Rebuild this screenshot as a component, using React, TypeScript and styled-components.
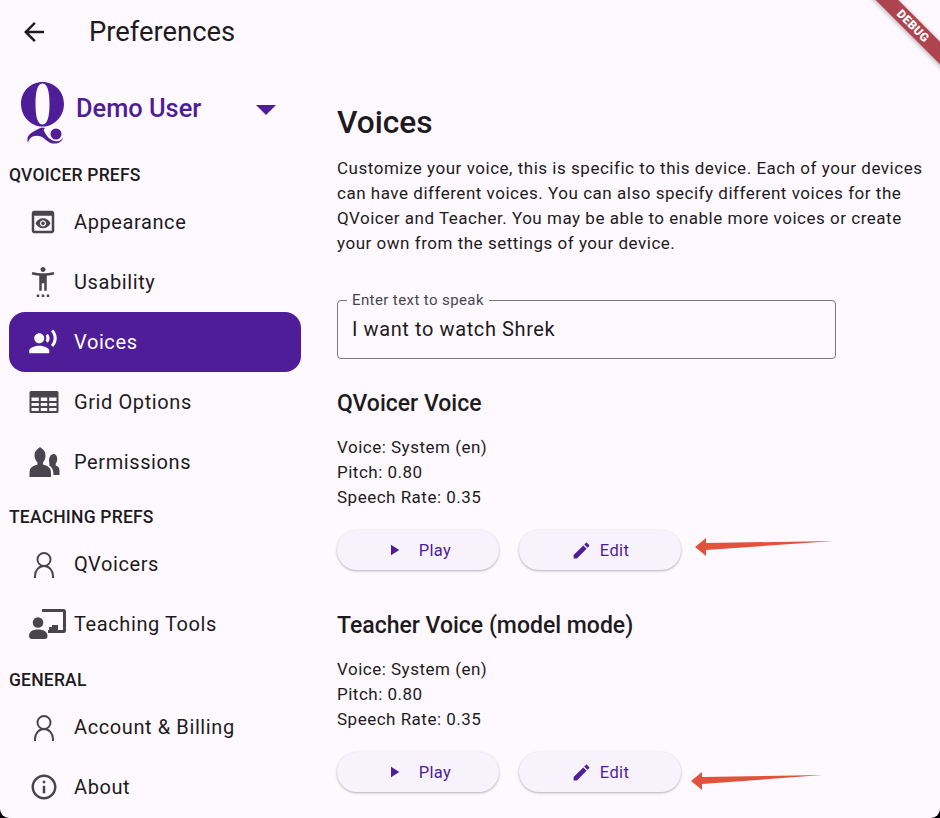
import React from "react";
import styled, { createGlobalStyle } from "styled-components";

const purple = "#4f1d98";
const ink = "#1d1b20";
const iconInk = "#49454f";

const Global = createGlobalStyle`
  html, body { margin: 0; padding: 0; background: #000; }
  body { width: 940px; height: 818px; overflow: hidden; font-family: Roboto, "Liberation Sans", sans-serif; color: ${ink}; }
`;

const Page = styled.div`
  position: relative;
  width: 940px;
  height: 818px;
  overflow: hidden;
  background: #fef9ff;
  border-bottom-left-radius: 9px;
  border-bottom-right-radius: 9px;
  display: flex;
  flex-direction: column;
`;

const AppBar = styled.header`
  height: 64px;
  flex: none;
  display: flex;
  align-items: center;
  padding-left: 19px;
  box-sizing: border-box;
`;

const BackIcon = styled.svg`
  width: 30px;
  height: 30px;
  fill: ${ink};
  flex: none;
`;

const Title = styled.h1`
  margin: 0 0 0 40px;
  font-size: 27.4px;
  font-weight: 400;
  line-height: 36px;
`;

const Body = styled.div`
  display: flex;
  flex: 1;
  min-height: 0;
`;

const Sidebar = styled.nav`
  width: 301px;
  flex: none;
  padding-left: 9px;
  box-sizing: border-box;
  display: flex;
  flex-direction: column;
`;

const UserRow = styled.div`
  height: 79px;
  margin-top: 9px;
  display: flex;
  align-items: center;
  padding-left: 12px;
`;

const UserName = styled.span`
  margin: 0 0 10px 11px;
  font-size: 25.4px;
  font-weight: 500;
  color: ${purple};
  flex: 1;
  line-height: 32px;
`;

const Caret = styled.span`
  width: 0;
  height: 0;
  border-left: 10px solid transparent;
  border-right: 10px solid transparent;
  border-top: 10px solid ${purple};
  margin: 0 25px 5px 0;
`;

const Section = styled.div<{ $top: number }>`
  font-size: 17.5px;
  font-weight: 500;
  letter-spacing: 0.2px;
  line-height: 24px;
  height: 29px;
  margin-top: ${(p) => p.$top}px;
  color: ${ink};
`;

const Item = styled.a<{ $active?: boolean }>`
  height: 60px;
  display: flex;
  align-items: center;
  border-radius: 16px;
  background: ${(p) => (p.$active ? purple : "transparent")};
  color: ${(p) => (p.$active ? "#ffffff" : ink)};
  font-size: 20px;
  letter-spacing: 0.6px;
  flex: none;
`;

const IconSlot = styled.span<{ $active?: boolean }>`
  width: 65px;
  padding-left: 19px;
  box-sizing: border-box;
  flex: none;
  display: flex;
  align-items: center;
  color: ${(p) => (p.$active ? "#ffffff" : iconInk)};
  svg { display: block; fill: currentColor; flex: none; }
`;

const Main = styled.main`
  flex: 1;
  padding: 37px 0 0 36px;
  min-width: 0;
`;

const Heading = styled.h2`
  margin: 0;
  font-size: 31.7px;
  font-weight: 500;
  line-height: 44px;
  color: ${ink};
`;

const Intro = styled.p`
  margin: 11px 0 0;
  width: 592px;
  font-size: 17px;
  line-height: 25px;
  letter-spacing: 0.52px;
  color: ${ink};
`;

const Field = styled.div`
  position: relative;
  margin-top: 44px;
  width: 499px;
  height: 59px;
  box-sizing: border-box;
  border: 1px solid #79747e;
  border-radius: 4px;
  display: flex;
  align-items: center;
  padding: 0 0 2px 14px;
  font-size: 20px;
  letter-spacing: 0.6px;
  color: ${ink};
`;

const FieldLabel = styled.span`
  position: absolute;
  top: -9px;
  left: 9px;
  padding: 0 5px;
  background: #fef9ff;
  font-size: 15px;
  letter-spacing: 0.4px;
  line-height: 17px;
  color: ${iconInk};
`;

const VoiceTitle = styled.h3<{ $top: number }>`
  margin: ${(p) => p.$top}px 0 0;
  font-size: 23px;
  font-weight: 500;
  line-height: 28px;
  color: ${ink};
`;

const Details = styled.div`
  margin-top: 17px;
  font-size: 17px;
  line-height: 25px;
  letter-spacing: 0.5px;
  color: ${ink};
`;

const Actions = styled.div`
  position: relative;
  margin-top: 20px;
  display: flex;
  gap: 20px;
  width: 345px;
`;

const Pill = styled.button`
  width: 162px;
  height: 40px;
  border: 0;
  padding: 0;
  border-radius: 20px;
  background: #f7f2fb;
  box-shadow: 0 1px 2px rgba(0, 0, 0, 0.22), 0 1px 3px 1px rgba(0, 0, 0, 0.06);
  display: flex;
  align-items: center;
  justify-content: center;
  gap: 8px;
  color: ${purple};
  font-family: inherit;
  font-size: 16.5px;
  letter-spacing: 0.35px;
  svg { fill: currentColor; display: block; }
`;

const PlayLabel = styled.span`
  margin-left: 8px;
`;

const Arrow = styled.svg<{ $left: number; $top: number }>`
  position: absolute;
  left: ${(p) => p.$left}px;
  top: ${(p) => p.$top}px;
  overflow: visible;
`;

const RibbonClip = styled.div`
  position: absolute;
  top: 0;
  right: 0;
  width: 80px;
  height: 80px;
  overflow: hidden;
  pointer-events: none;
`;

const Ribbon = styled.div`
  position: absolute;
  top: 18px;
  right: -31px;
  width: 116px;
  height: 16px;
  line-height: 16px;
  text-align: center;
  transform: rotate(45deg);
  background: #a8353f;
  opacity: 0.92;
  box-shadow: 0 1px 5px rgba(0, 0, 0, 0.35);
  color: #ffffff;
  font-size: 12px;
  font-weight: 900;
  letter-spacing: 0.4px;
`;

const Svg = ({ size, w, h, children, vb }: { size?: number; w?: number; h?: number; vb?: string; children: React.ReactNode }) => (
  <svg width={w ?? size} height={h ?? size} viewBox={vb ?? "0 0 24 24"}>{children}</svg>
);

const PreviewIcon = () => (
  <Svg size={30}>
    <path d="M19 3H5c-1.11 0-2 .9-2 2v14c0 1.100.89 2 2 2h14c1.100 0 2-.9 2-2V5c0-1.100-.89-2-2-2zm0 16H5V7h14v12z" />
    <path d="M13.500 13c0 .83-.67 1.500-1.500 1.500s-1.500-.67-1.500-1.500.67-1.500 1.500-1.500 1.500.67 1.500 1.500zM12 9c-2.730 0-5.060 1.660-6 4 .94 2.340 3.270 4 6 4s5.060-1.660 6-4c-.94-2.340-3.270-4-6-4zm0 6.500c-1.380 0-2.500-1.120-2.500-2.500s1.120-2.500 2.500-2.500 2.500 1.120 2.500 2.500-1.120 2.500-2.500 2.500z" />
  </Svg>
);

const AccessIcon = () => (
  <Svg size={30}>
    <path d="M20.500 4c-2.610.7-5.670 1-8.500 1s-5.890-.3-8.500-1L3 6c1.860.5 4 .83 6 1v12h2v-6h2v6h2V7c2-.17 4.140-.5 6-1l-.5-2zM12 4c1.100 0 2-.9 2-2s-.9-2-2-2-2 .9-2 2 .9 2 2 2zM7 24h2v-2H7v2zm4 0h2v-2h-2v2zm4 0h2v-2h-2v2z" />
  </Svg>
);

const VoiceIcon = () => (
  <Svg size={30}>
    <path d="M9 13c2.210 0 4-1.790 4-4s-1.790-4-4-4-4 1.790-4 4 1.790 4 4 4zm0 2c-2.670 0-8 1.340-8 4v2h16v-2c0-2.660-5.330-4-8-4zm6.760-9.640-1.680 1.690c.84 1.180.84 2.710 0 3.890l1.680 1.690c2.020-2.020 2.020-5.070 0-7.270zM20.070 2l-1.630 1.630c2.770 3.020 2.770 7.560 0 10.740L20.070 16c3.900-3.890 3.910-9.950 0-14z" />
  </Svg>
);

const GridIcon = () => (
  <Svg w={31} h={24} vb="-1 0 31 24">
    <path fillRule="evenodd" d="M2 1h26a1.500 1.500 0 0 1 1.500 1.500v19A1.500 1.500 0 0 1 28 23H2A1.500 1.500 0 0 1 .5 21.500v-19A1.500 1.500 0 0 1 2 1zM2.500 7.500v3.500h7.300V7.500zm9.300 0v3.500h6.400V7.500zm8.400 0v3.500h7.300V7.500zM2.500 13v3h7.300v-3zm9.300 0v3h6.400v-3zm8.400 0v3h7.300v-3zM2.500 18v3h7.300v-3zm9.300 0v3h6.400v-3zm8.400 0v3h7.300v-3z" />
  </Svg>
);

const PeopleIcon = () => (
  <Svg w={32} h={30} vb="0 0 32 30">
    <path d="M12 0c1 1.200 5.500 2.500 5.500 8.500 0 3-1 5.300-2.500 7v2c3 1 6.500 2.200 7.500 5 .5 2 .5 4 .5 7.500H1.500c0-3.500 0-5.500.5-7.500 1-2.800 4.500-4 7.500-5v-2C8 14 6.500 11.500 6.500 8.500 6.500 3 10 2.500 12 0z" />
    <path d="M25.500 7c2.200 0 3.700 2 3.700 5 0 2-.7 3.600-1.500 4.500v2c1.500.6 3 1.400 3.500 3 .3 1 .3 3.500.3 6.500h-6c0-5-1.300-7.500-4.500-9.700 .5-.8.5-1.500.3-2.300-.2-.5-.3-1.500-.3-2.500 0-3.500 2-6.500 4.500-6.500z" />
  </Svg>
);

const PersonIcon = () => (
  <svg width="30" height="30" viewBox="0 0 30 30" style={{ fill: "none" }}>
    <circle cx="16" cy="10.500" r="6.500" fill="none" stroke="currentColor" strokeWidth="2" />
    <path d="M7 29v-2c0-5.800 4-10 9-10s9 4.200 9 10v2" fill="none" stroke="currentColor" strokeWidth="2" />
  </svg>
);

const TeachIcon = () => (
  <Svg w={38} h={30} vb="-1 0 38 30">
    <path d="M13 0h21.500A2.500 2.500 0 0 1 37 2.500v19a2.500 2.500 0 0 1-2.500 2.500H19v-3h15V3H13z" />
    <path d="M23 16h6v5h-9v-3h3z" />
    <circle cx="9" cy="13.500" r="5.300" />
    <path d="M0 27c0-4.500 4-6.500 9-6.500s9.500 2 9.500 6.500c0 2-1 3-2.500 3H3c-2 0-3-1-3-3z" />
  </Svg>
);

const InfoIcon = () => (
  <Svg size={30} vb="-0.8 0 24 24">
    <path d="M11 7h2v2h-2zm0 4h2v6h-2zm1-9C6.480 2 2 6.480 2 12s4.480 10 10 10 10-4.480 10-10S17.520 2 12 2zm0 18c-4.410 0-8-3.590-8-8s3.590-8 8-8 8 3.590 8 8-3.590 8-8 8z" />
  </Svg>
);

const QLogo = () => (
  <svg width="44" height="62" viewBox="0 0 44 62" style={{ flex: "none", display: "block" }}>
    <path
      fill={purple}
      fillRule="evenodd"
      d="M21.500 0C33.500 0 43 9.500 43 22c0 11.500-8 20.500-18.500 22.500h-6C8 42.500 0 33.500 0 22 0 9.500 9.500 0 21.500 0zm0 1.500C17 1.500 14.500 8 14.500 22s2.500 20.500 7 20.500 7-6.500 7-20.500-2.500-20.500-7-20.500z"
    />
    <path
      fill={purple}
      d="M7 60.500c-1.500-4 0-7.500 4-10 4-2.500 7-4 10-5l3 .5c-1 1-1.500 2-1 3 2 4 5 8.500 10 10 3.500 1 7 0 9-3.500-1 4.500-5 6.500-10 6-5-.5-8-5-12-7-3.500-1.500-8-1-10.500 1.500-1.500 1.500-2 3-2.500 4.500z"
    />
    <circle cx="35" cy="52" r="5.500" fill={purple} />
  </svg>
);

const PencilIcon = () => (
  <svg width="21" height="21" viewBox="0 0 24 24">
    <path d="M3 17.250V21h3.750L17.810 9.940l-3.750-3.750L3 17.250zM20.710 7.040c.39-.39.39-1.020 0-1.410l-2.340-2.340c-.39-.39-1.020-.39-1.410 0l-1.830 1.830 3.750 3.750 1.830-1.830z" />
  </svg>
);

const PlayIcon = () => (
  <svg width="18" height="18" viewBox="0 0 24 24">
    <path d="M8 5v14l11-7z" />
  </svg>
);

const Actionbar = ({ arrowLeft, arrowTop, arrowWidth }: { arrowLeft: number; arrowTop: number; arrowWidth: number }) => (
  <Actions>
    <Pill>
      <PlayIcon />
      <PlayLabel>Play</PlayLabel>
    </Pill>
    <Pill>
      <PencilIcon />
      <span>Edit</span>
    </Pill>
    <Arrow $left={arrowLeft} $top={arrowTop} width={arrowWidth} height="20" viewBox={`0 0 ${arrowWidth} 20`}>
      <polygon fill="#e0523c" points={`0,10 11,1 11,6 ${arrowWidth},4 11,13 11,19`} />
    </Arrow>
  </Actions>
);

type NavEntry = { label: string; icon: React.ReactNode; active?: boolean };

const nav1: NavEntry[] = [
  { label: "Appearance", icon: <PreviewIcon /> },
  { label: "Usability", icon: <AccessIcon /> },
  { label: "Voices", icon: <VoiceIcon />, active: true },
  { label: "Grid Options", icon: <GridIcon /> },
  { label: "Permissions", icon: <PeopleIcon /> },
];
const nav2: NavEntry[] = [
  { label: "QVoicers", icon: <PersonIcon /> },
  { label: "Teaching Tools", icon: <TeachIcon /> },
];
const nav3: NavEntry[] = [
  { label: "Account & Billing", icon: <PersonIcon /> },
  { label: "About", icon: <InfoIcon /> },
];

const NavList = ({ items }: { items: NavEntry[] }) => (
  <>
    {items.map((it) => (
      <Item key={it.label} $active={it.active}>
        <IconSlot $active={it.active}>{it.icon}</IconSlot>
        {it.label}
      </Item>
    ))}
  </>
);

export default function App() {
  return (
    <Page>
      <Global />
      <AppBar>
        <BackIcon viewBox="0 0 24 24">
          <path d="M20 11H7.830l5.590-5.590L12 4l-8 8 8 8 1.410-1.410L7.830 13H20v-2z" />
        </BackIcon>
        <Title>Preferences</Title>
      </AppBar>
      <Body>
        <Sidebar>
          <UserRow>
            <QLogo />
            <UserName>Demo User</UserName>
            <Caret />
          </UserRow>
          <Section $top={11}>QVOICER PREFS</Section>
          <NavList items={nav1} />
          <Section $top={13}>TEACHING PREFS</Section>
          <NavList items={nav2} />
          <Section $top={14}>GENERAL</Section>
          <NavList items={nav3} />
        </Sidebar>
        <Main>
          <Heading>Voices</Heading>
          <Intro>
            Customize your voice, this is specific to this device. Each of your devices can have different voices. You can also specify different voices for the QVoicer and Teacher. You may be able to enable more voices or create your own from the settings of your device.
          </Intro>
          <Field>
            <FieldLabel>Enter text to speak</FieldLabel>
            I want to watch Shrek
          </Field>
          <VoiceTitle $top={31}>QVoicer Voice</VoiceTitle>
          <Details>
            Voice: System (en)
            <br />
            Pitch: 0.80
            <br />
            Speech Rate: 0.35
          </Details>
          <Actionbar arrowLeft={358} arrowTop={7} arrowWidth={139} />
          <VoiceTitle $top={42}>Teacher Voice (model mode)</VoiceTitle>
          <Details>
            Voice: System (en)
            <br />
            Pitch: 0.80
            <br />
            Speech Rate: 0.35
          </Details>
          <Actionbar arrowLeft={354} arrowTop={19} arrowWidth={132} />
        </Main>
      </Body>
      <RibbonClip>
        <Ribbon>DEBUG</Ribbon>
      </RibbonClip>
    </Page>
  );
}
